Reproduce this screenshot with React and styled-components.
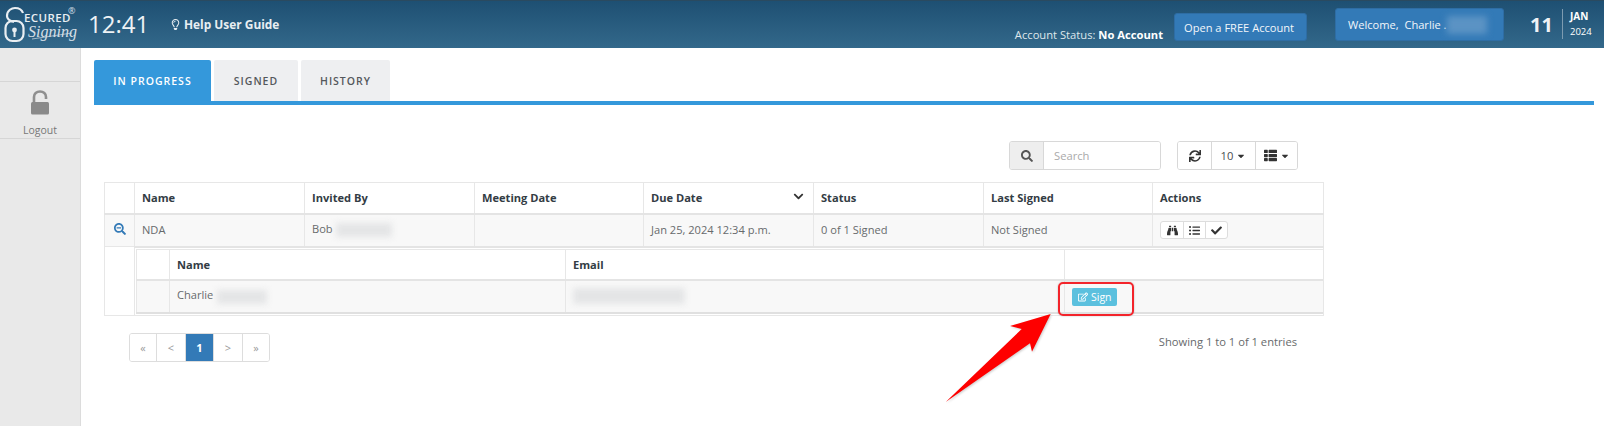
import React from 'react';
import styled, { createGlobalStyle } from 'styled-components';
import {
  FaRegLightbulb,
  FaSearch,
  FaSync,
  FaThList,
  FaCaretDown,
  FaSearchMinus,
  FaChevronDown,
  FaBinoculars,
  FaListUl,
  FaCheck,
  FaRegEdit,
} from 'react-icons/fa';

const GlobalStyle = createGlobalStyle`
  html, body {
    margin: 0;
    padding: 0;
    background: #fff;
    overflow: hidden;
  }
  body {
    font-family: "Open Sans", "Liberation Sans", sans-serif;
    font-size: 13px;
    color: #676a6c;
  }
  * { box-sizing: border-box; }
`;

const Page = styled('div')`
  position: relative;
  width: 1604px;
  height: 426px;
  overflow: hidden;
`;

const Header = styled('header')`
  height: 48px;
  display: flex;
  align-items: stretch;
  color: #fff;
  background: linear-gradient(to bottom, #1e5073, #33688a);
  border-top: 1px solid #2a4a60;
`;

const LogoBox = styled('div')`
  width: 80px;
  padding: 2px 0 0 4px;
  flex: none;
`;

const Clock = styled('div')`
  width: 82px;
  margin-left: 8px;
  font-size: 24px;
  line-height: 46px;
  color: #eef2f5;
`;

const HelpLink = styled('a')`
  font-size: 11.9px;
  font-weight: 700;
  line-height: 45px;
  color: #e8eef2;
  display: flex;
  align-items: center;
  gap: 3px;
  svg { font-size: 11px; }
`;

const HeaderRight = styled('div')`
  margin-left: auto;
  margin-right: 4px;
  display: flex;
  align-items: flex-start;
`;

const AccountStatus = styled('div')`
  margin-top: 26px;
  font-size: 11.2px;
  line-height: 16px;
  color: #dfe7ec;
  b { color: #fff; }
`;

const HeadButton = styled('div')`
  margin-top: ${({ $top }) => $top}px;
  margin-left: ${({ $gap }) => $gap}px;
  width: ${({ $width }) => $width}px;
  height: ${({ $height }) => $height}px;
  padding-left: ${({ $pad }) => $pad}px;
  background: #337ab7;
  border: 1px solid #2e6da4;
  border-radius: 3px;
  font-size: 11.1px;
  display: flex;
  align-items: center;
  color: #f2f6fa;
`;

const Blur = styled('span')`
  display: inline-block;
  vertical-align: middle;
  width: ${({ $width }) => $width}px;
  height: ${({ $height }) => $height || 14}px;
  margin-left: ${({ $gap }) => $gap || 0}px;
  background: ${({ $color }) => $color || '#e4e5e6'};
  filter: blur(3px);
`;

const DateBox = styled('div')`
  display: flex;
  align-items: center;
  margin-left: 26px;
  margin-top: 8px;
  width: 70px;
`;

const DayNum = styled('div')`
  font-size: 20px;
  font-weight: 700;
  color: #eef2f5;
  width: 26px;
`;

const MonthYear = styled('div')`
  margin-left: 6px;
  padding-left: 7px;
  border-left: 1px solid #7d9bb0;
  font-size: 9.5px;
  line-height: 15px;
  height: 30px;
  b { display: block; font-size: 10px; }
`;

const Body = styled('div')`
  display: flex;
  height: 378px;
`;

const Sidebar = styled('aside')`
  width: 81px;
  flex: none;
  background: #e9e9e9;
  border-right: 1px solid #dcdcdc;
  padding-top: 33px;
`;

const SideItem = styled('div')`
  height: 58px;
  border-top: 1px solid #d6d6d6;
  border-bottom: 1px solid #d6d6d6;
  display: flex;
  flex-direction: column;
  align-items: center;
  padding-top: 8px;
  font-size: 10.5px;
  color: #777;
  svg { margin-bottom: 8px; }
`;

const Main = styled('main')`
  flex: 1;
  padding: 12px 10px 0 13px;
`;

const Tabs = styled('div')`
  display: flex;
  gap: 3px;
  height: 45px;
  border-bottom: 4px solid #3498db;
`;

const Tab = styled('div')`
  width: ${({ $width }) => $width}px;
  height: 41px;
  display: flex;
  align-items: center;
  justify-content: center;
  font-size: 10.5px;
  font-weight: 600;
  letter-spacing: 1px;
  border-radius: 2px 2px 0 0;
  color: ${({ $active }) => ($active ? '#fff' : '#54585c')};
  background: ${({ $active }) => ($active ? '#3498db' : '#eeeff1')};
`;

const Toolbar = styled('div')`
  display: flex;
  justify-content: flex-end;
  gap: 16px;
  width: 1204px;
  margin-top: 36px;
`;

const Group = styled('div')`
  display: flex;
  height: 29px;
  border: 1px solid #d8d8d8;
  border-radius: 3px;
  overflow: hidden;
  background: #fff;
`;

const GroupCell = styled('div')`
  width: ${({ $width }) => $width}px;
  display: flex;
  align-items: center;
  gap: 3px;
  font-size: 11.2px;
  color: ${({ $muted }) => ($muted ? '#aaa' : '#4a4d50')};
  background: ${({ $shade }) => ($shade ? '#eeeeee' : '#fff')};
  border-left: ${({ $first }) => ($first ? 'none' : '1px solid #d8d8d8')};
  justify-content: ${({ $start }) => ($start ? 'flex-start' : 'center')};
  padding-left: ${({ $start }) => ($start ? '10px' : '0')};
  svg { color: ${({ $shade }) => ($shade ? '#555' : '#333')}; }
`;

const Table = styled('table')`
  table-layout: fixed;
  border-collapse: collapse;
  width: ${({ $width }) => $width}px;
  font-size: 11.1px;
`;

const OuterTable = styled(Table)`
  margin: 12px 0 0 10px;
  border: 1px solid #e7e7e7;
`;

const Th = styled('th')`
  height: ${({ $height }) => $height || 31}px;
  padding: 0 7px;
  text-align: left;
  font-weight: 700;
  color: #333c44;
  background: #fff;
  border: 1px solid #e7e7e7;
  border-bottom: 2px solid #e4e4e4;
  position: relative;
  svg { position: absolute; right: 9px; top: 8px; font-size: 11px; color: #333; }
`;

const Td = styled('td')`
  height: ${({ $height }) => $height || 33}px;
  padding: 0 7px 2px;
  background: #f8f8f8;
  border: 1px solid #e7e7e7;
  color: #676a6c;
  white-space: nowrap;
`;

const ExpandTd = styled(Td)`
  text-align: center;
  padding: 0 0 2px;
  svg { color: #337ab7; font-size: 12px; display: block; margin: 0 auto; }
`;

const BlankTd = styled('td')`
  background: #fff;
  border: 1px solid #e7e7e7;
  padding: 0;
`;

const NestedTd = styled('td')`
  padding: 1px 0 1px 1px;
  background: #fff;
  border: 1px solid #e7e7e7;
  border-top: 2px solid #e4e4e4;
`;

const NestedTable = styled(Table)`
  border: 1px solid #e0e0e0;
  border-width: 0 0 2px 1px;
`;

const ActionGroup = styled('div')`
  display: inline-flex;
  height: 18px;
  margin-top: 2px;
  border: 1px solid #ddd;
  border-radius: 3px;
  background: #fff;
  vertical-align: middle;
`;

const ActionButton = styled('span')`
  width: 22px;
  display: flex;
  align-items: center;
  justify-content: center;
  font-size: 11px;
  color: #333;
  border-left: ${({ $first }) => ($first ? 'none' : '1px solid #ddd')};
`;

const SignButton = styled('button')`
  display: inline-flex;
  align-items: center;
  gap: 3px;
  height: 18px;
  width: 45px;
  margin-top: 2px;
  padding: 0 0 0 6px;
  border: none;
  border-radius: 2px;
  background: #5bc0de;
  color: #fff;
  font-family: inherit;
  font-size: 10.5px;
  svg { font-size: 10px; }
`;

const Footer = styled('div')`
  display: flex;
  justify-content: space-between;
  align-items: flex-start;
  width: 1168px;
  margin: 17px 0 0 35px;
`;

const Pagination = styled('div')`
  display: flex;
  height: 29px;
  border: 1px solid #ddd;
  border-radius: 3px;
  overflow: hidden;
`;

const PageCell = styled('div')`
  width: ${({ $width }) => $width}px;
  display: flex;
  align-items: center;
  justify-content: center;
  font-size: 11px;
  border-left: ${({ $first }) => ($first ? 'none' : '1px solid #ddd')};
  font-weight: ${({ $active }) => ($active ? 700 : 400)};
  color: ${({ $active }) => ($active ? '#fff' : '#999')};
  background: ${({ $active }) => ($active ? '#337ab7' : '#fff')};
`;

const Showing = styled('div')`
  margin-top: 1px;
  font-size: 11.2px;
  color: #676a6c;
`;

const Highlight = styled('div')`
  position: absolute;
  left: 1058px;
  top: 282px;
  width: 76px;
  height: 34px;
  border: 2px solid #f3242b;
  border-radius: 5px;
  box-shadow: 0 0 2px rgba(0, 0, 0, 0.25);
`;

const Arrow = styled('svg')`
  position: absolute;
  left: 940px;
  top: 310px;
  filter: drop-shadow(1px 1px 1px rgba(0, 0, 0, 0.2));
`;

const Logo = () => (
  <svg width="76" height="40" viewBox="0 -4 76 40">
    <path d="M3 9 C3 3 8 1 11 1 C15 1 18 3 19 6" fill="none" stroke="#e9eef2" strokeWidth="2.2" />
    <path d="M3 9 C3 12 6 14 10 15" fill="none" stroke="#e9eef2" strokeWidth="2.2" />
    <rect x="1.5" y="14" width="18" height="20" rx="7" fill="none" stroke="#e9eef2" strokeWidth="2.2" />
    <circle cx="10.500" cy="23" r="2.400" fill="#e9eef2" />
    <rect x="9.500" y="24" width="2" height="6" fill="#e9eef2" />
    <text x="20" y="15" fontFamily="Open Sans, sans-serif" fontSize="11.500" letterSpacing="0.400" fontWeight="600" fill="#e9eef2">ECURED</text>
    <text x="24" y="30" fontFamily="Liberation Serif, serif" fontStyle="italic" fontSize="16" fill="#d5dfe6">Signing</text>
    <path d="M28 32 L68 26" stroke="#d5dfe6" strokeWidth="0.7" />
    <text x="64" y="7" fontFamily="Open Sans, sans-serif" fontSize="9" fill="#d5dfe6">®</text>
  </svg>
);

const LockIcon = () => (
  <svg width="20" height="25" viewBox="0 0 20 25">
    <path d="M4 13 V7 C4 3.500 6.500 1.500 10 1.500 C13.500 1.500 16 3.500 16 7 V9" fill="none" stroke="#8f8f8f" strokeWidth="2.600" />
    <rect x="1" y="12" width="18" height="12.500" rx="1.500" fill="#8a8a8a" />
  </svg>
);

const App = () => {
  return (
    <Page>
      <GlobalStyle />
      <Header>
        <LogoBox>
          <Logo />
        </LogoBox>
        <Clock>12:41</Clock>
        <HelpLink>
          <FaRegLightbulb />
          Help User Guide
        </HelpLink>
        <HeaderRight>
          <AccountStatus>
            Account Status: <b>No Account</b>
          </AccountStatus>
          <HeadButton $top={12} $gap={11} $width={133} $height={28} $pad={9}>
            Open a FREE Account
          </HeadButton>
          <HeadButton $top={7} $gap={28} $width={169} $height={33} $pad={12}>
            Welcome, &nbsp;Charlie .<Blur $width={40} $height={18} $color="#5b93c4" />
          </HeadButton>
          <DateBox>
            <DayNum>11</DayNum>
            <MonthYear>
              <b>JAN</b>
              2024
            </MonthYear>
          </DateBox>
        </HeaderRight>
      </Header>
      <Body>
        <Sidebar>
          <SideItem>
            <LockIcon />
            Logout
          </SideItem>
        </Sidebar>
        <Main>
          <Tabs>
            <Tab $active $width={117}>IN PROGRESS</Tab>
            <Tab $width={84}>SIGNED</Tab>
            <Tab $width={89}>HISTORY</Tab>
          </Tabs>
          <Toolbar>
            <Group>
              <GroupCell $first $shade $width={33}><FaSearch size={12} /></GroupCell>
              <GroupCell $muted $start $width={117}>Search</GroupCell>
            </Group>
            <Group>
              <GroupCell $first $width={33}><FaSync size={12} /></GroupCell>
              <GroupCell $width={44}>10 <FaCaretDown size={10} /></GroupCell>
              <GroupCell $width={42}><FaThList size={13} /><FaCaretDown size={10} /></GroupCell>
            </Group>
          </Toolbar>
          <OuterTable $width={1219}>
            <colgroup>
              <col width="30" />
              <col width="170" />
              <col width="170" />
              <col width="169" />
              <col width="170" />
              <col width="170" />
              <col width="169" />
              <col width="171" />
            </colgroup>
            <thead>
              <tr>
                <Th />
                <Th>Name</Th>
                <Th>Invited By</Th>
                <Th>Meeting Date</Th>
                <Th>Due Date<FaChevronDown /></Th>
                <Th>Status</Th>
                <Th>Last Signed</Th>
                <Th>Actions</Th>
              </tr>
            </thead>
            <tbody>
              <tr>
                <ExpandTd><FaSearchMinus /></ExpandTd>
                <Td>NDA</Td>
                <Td>Bob<Blur $width={56} $gap={3} /></Td>
                <Td />
                <Td>Jan 25, 2024 12:34 p.m.</Td>
                <Td>0 of 1 Signed</Td>
                <Td>Not Signed</Td>
                <Td>
                  <ActionGroup>
                    <ActionButton $first><FaBinoculars /></ActionButton>
                    <ActionButton><FaListUl /></ActionButton>
                    <ActionButton><FaCheck /></ActionButton>
                  </ActionGroup>
                </Td>
              </tr>
              <tr>
                <BlankTd />
                <NestedTd colSpan={7}>
                  <NestedTable $width={1187}>
                    <colgroup>
                      <col width="33" />
                      <col width="396" />
                      <col width="499" />
                      <col width="259" />
                    </colgroup>
                    <thead>
                      <tr>
                        <Th />
                        <Th>Name</Th>
                        <Th>Email</Th>
                        <Th />
                      </tr>
                    </thead>
                    <tbody>
                      <tr>
                        <Td />
                        <Td>Charlie<Blur $width={50} $gap={4} /></Td>
                        <Td><Blur $width={112} $height={16} /></Td>
                        <Td><SignButton><FaRegEdit />Sign</SignButton></Td>
                      </tr>
                    </tbody>
                  </NestedTable>
                </NestedTd>
              </tr>
            </tbody>
          </OuterTable>
          <Footer>
            <Pagination>
              <PageCell $first $width={26}>«</PageCell>
              <PageCell $width={29}>&lt;</PageCell>
              <PageCell $active $width={28}>1</PageCell>
              <PageCell $width={29}>&gt;</PageCell>
              <PageCell $width={27}>»</PageCell>
            </Pagination>
            <Showing>Showing 1 to 1 of 1 entries</Showing>
          </Footer>
        </Main>
      </Body>
      <Highlight />
      <Arrow width="120" height="100" viewBox="0 0 120 100">
        <path d="M5.700 92 L81.700 19 L70 16 L110.700 4 L92 41.700 L90 33.300 Z" fill="#fe0000" />
      </Arrow>
    </Page>
  );
};

export default App;
